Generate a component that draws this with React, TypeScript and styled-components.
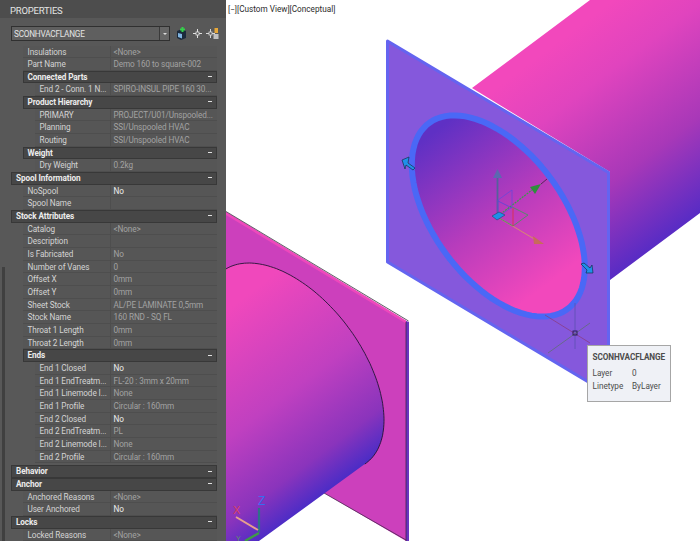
import React from "react";
import styled, { createGlobalStyle } from "styled-components";

const Global = createGlobalStyle`
  html, body { margin: 0; padding: 0; background: #fff; }
  #root { width: 700px; height: 541px; overflow: hidden; }
`;

const Screen = styled.div`
  display: flex;
  width: 700px;
  height: 541px;
  overflow: hidden;
  font-family: Roboto, "Noto Sans", sans-serif;
`;

const Panel = styled.aside`
  display: flex;
  flex-direction: column;
  width: 226px;
  height: 541px;
  flex: none;
  background: #585858;
  overflow: hidden;
`;

const TitleBar = styled.header`
  display: flex;
  align-items: center;
  height: 18px;
  padding: 2px 0 0 10px;
  box-sizing: border-box;
  background: #4d4d4d;
  color: #e4e4e4;
  font-size: 9.5px;
  letter-spacing: -0.2px;
`;

const SelectorRow = styled.div`
  display: flex;
  align-items: center;
  height: 27.5px;
  padding: 4px 0 0 11px;
  box-sizing: border-box;
`;

const Select = styled.div`
  display: flex;
  align-items: center;
  width: 159px;
  height: 15px;
  box-sizing: border-box;
  background: #5f5f5f;
  border: 1px solid #303030;
  color: #e4e4e4;
  font-size: 8.2px;
  letter-spacing: -0.2px;
`;

const SelectText = styled.span`
  flex: 1;
  padding-left: 2px;
`;

const SelectArrow = styled.span`
  display: flex;
  align-items: center;
  justify-content: center;
  width: 9px;
  height: 100%;
  border-left: 1px solid #3a3a3a;
  background: #666;
  &::after {
    content: "";
    border-left: 2px solid transparent;
    border-right: 2px solid transparent;
    border-top: 2px solid #ddd;
  }
`;

const Tools = styled.div`
  display: flex;
  align-items: center;
  gap: 0.5px;
  margin-left: 4px;
`;

const ToolIcon = styled.svg`
  width: 15px;
  height: 15px;
  display: block;
`;

const Body = styled.div`
  display: flex;
  flex: 1;
  min-height: 0;
`;

const Gutter = styled.div`
  display: flex;
  align-items: flex-end;
  width: 11px;
  flex: none;
  padding-left: 2px;
  box-sizing: border-box;
`;

const Thumb = styled.div`
  width: 3px;
  height: 274px;
  background: #404040;
`;

const List = styled.div`
  width: 206px;
  flex: none;
`;

const SectionRow = styled.div<{ $level: number; $gap?: boolean }>`
  display: flex;
  align-items: center;
  justify-content: space-between;
  height: 12.67px;
  box-sizing: border-box;
  margin-left: ${(p) => p.$level * 12}px;
  margin-top: ${(p) => (p.$gap ? 2.2 : 0)}px;
  padding: 0 4px 1px ${(p) => (p.$level === 0 ? 4 : 3.5)}px;
  background: #474747;
  border: 1px solid #383838;
  color: #ececec;
  font-size: 8.2px;
  letter-spacing: -0.1px;
  font-weight: 700;
`;

const Minus = styled.span`
  width: 4px;
  height: 1px;
  background: #e0e0e0;
`;

const PropRow = styled.div<{ $level: number }>`
  display: flex;
  height: 12.67px;
  box-sizing: border-box;
  margin-left: ${(p) => p.$level * 12}px;
  border-bottom: 1px solid #4e4e4e;
  background: #565656;
  font-size: 8.2px;
  letter-spacing: -0.1px;
  line-height: 12px;
  white-space: nowrap;
`;

const Label = styled.div<{ $level: number }>`
  width: ${(p) => 100 - p.$level * 12}px;
  flex: none;
  box-sizing: border-box;
  padding-left: 4.5px;
  color: #d4d4d4;
  border-right: 1px solid #4e4e4e;
  overflow: hidden;
`;

const Value = styled.div<{ $on?: boolean }>`
  flex: 1;
  padding-left: 2.5px;
  color: ${(p) => (p.$on ? "#ececec" : "#a2a2a2")};
  overflow: hidden;
`;

const Viewport = styled.main`
  position: relative;
  flex: 1;
  height: 541px;
  background: #fff;
`;

const Canvas = styled.svg`
  display: block;
  width: 474px;
  height: 541px;
`;

const ViewLabel = styled.div`
  position: absolute;
  left: 2px;
  top: 3px;
  color: #2c2c2c;
  font-size: 8.2px;
  line-height: 12px;
  white-space: nowrap;
`;

const Tooltip = styled.div`
  position: absolute;
  left: 361px;
  top: 345px;
  width: 84px;
  height: 57px;
  box-sizing: border-box;
  background: #eff1f6;
  border: 1px solid #a6a6a6;
  padding: 5px 0 0 4.5px;
  color: #4c4c4c;
  font-size: 8.2px;
`;

const TipTitle = styled.div`
  font-weight: 700;
  letter-spacing: -0.1px;
  line-height: 12px;
  margin-bottom: 4px;
`;

const TipGrid = styled.div`
  display: grid;
  grid-template-columns: 39.5px auto;
  row-gap: 1px;
  line-height: 12px;
`;

type Item =
  | { kind: "s"; level: number; text: string; gap?: boolean }
  | { kind: "p"; level: number; label: string; value?: string; on?: boolean };

const s = (level: number, text: string, gap?: boolean): Item => ({ kind: "s", level, text, gap });
const p = (level: number, label: string, value?: string, on?: boolean): Item => ({
  kind: "p",
  level,
  label,
  value,
  on,
});

const items: Item[] = [
  p(1, "Insulations", "<None>"),
  p(1, "Part Name", "Demo 160 to square-002"),
  s(1, "Connected Parts"),
  p(2, "End 2 - Conn. 1 N...", "SPIRO-INSUL PIPE 160 30..."),
  s(1, "Product Hierarchy"),
  p(2, "PRIMARY", "PROJECT/U01/Unspooled..."),
  p(2, "Planning", "SSI/Unspooled HVAC"),
  p(2, "Routing", "SSI/Unspooled HVAC"),
  s(1, "Weight"),
  p(2, "Dry Weight", "0.2kg"),
  s(0, "Spool Information"),
  p(1, "NoSpool", "No", true),
  p(1, "Spool Name"),
  s(0, "Stock Attributes"),
  p(1, "Catalog", "<None>"),
  p(1, "Description"),
  p(1, "Is Fabricated", "No"),
  p(1, "Number of Vanes", "0"),
  p(1, "Offset X", "0mm"),
  p(1, "Offset Y", "0mm"),
  p(1, "Sheet Stock", "AL/PE LAMINATE 0,5mm"),
  p(1, "Stock Name", "160 RND - SQ FL"),
  p(1, "Throat 1 Length", "0mm"),
  p(1, "Throat 2 Length", "0mm"),
  s(1, "Ends"),
  p(2, "End 1 Closed", "No", true),
  p(2, "End 1  EndTreatm...", "FL-20 : 3mm x 20mm"),
  p(2, "End 1 Linemode I...", "None"),
  p(2, "End 1 Profile", "Circular : 160mm"),
  p(2, "End 2 Closed", "No", true),
  p(2, "End 2  EndTreatm...", "PL"),
  p(2, "End 2 Linemode I...", "None"),
  p(2, "End 2 Profile", "Circular : 160mm"),
  s(0, "Behavior", true),
  s(0, "Anchor"),
  p(1, "Anchored Reasons", "<None>"),
  p(1, "User Anchored", "No", true),
  s(0, "Locks"),
  p(1, "Locked Reasons", "<None>"),
];

const isoPoints = (cx: number, cy: number, r: number, from = 0, to = 360) => {
  const pts: string[] = [];
  const steps = 96;
  for (let i = 0; i <= steps; i++) {
    const t = ((from + ((to - from) * i) / steps) * Math.PI) / 180;
    const x = cx + r * Math.cos(t);
    const y = cy + r * (0.594 * Math.cos(t) + Math.sin(t));
    pts.push(`${x.toFixed(1)} ${y.toFixed(1)}`);
  }
  return pts;
};

const lowerArc = isoPoints(294.6, 367, 89.4, -141, 38.3);

function Scene() {
  const ox = 226;
  return (
    <Canvas viewBox={`${ox} 0 474 541`}>
      <defs>
        <linearGradient id="pipe" gradientUnits="userSpaceOnUse" x1="560" y1="40" x2="692" y2="216">
          <stop offset="0" stopColor="#f248bc" />
          <stop offset="0.25" stopColor="#e044be" />
          <stop offset="0.66" stopColor="#a838b8" />
          <stop offset="1" stopColor="#5a2cc4" />
        </linearGradient>
        <linearGradient id="hole" gradientUnits="userSpaceOnUse" x1="430" y1="135" x2="544" y2="287">
          <stop offset="0" stopColor="#5f30c4" />
          <stop offset="0.55" stopColor="#b83cbc" />
          <stop offset="1" stopColor="#f248bc" />
        </linearGradient>
        <linearGradient id="lower" gradientUnits="userSpaceOnUse" x1="240" y1="300" x2="364" y2="465">
          <stop offset="0" stopColor="#f048bc" />
          <stop offset="0.5" stopColor="#c040c0" />
          <stop offset="0.83" stopColor="#8a34bc" />
          <stop offset="1" stopColor="#4a2cc6" />
        </linearGradient>
      </defs>

      <polygon points="472,88 590,0 700,0 700,213 610,280 610,172" fill="url(#pipe)" />
      <polygon points="387.5,41 608.5,172.5 608.5,394 387.5,262" fill="#8558dc" stroke="#6464f0" strokeWidth="3" strokeLinejoin="round" />
      <polygon points={isoPoints(498.3, 216, 86.5).join(",")} fill="url(#hole)" stroke="#4a68f6" strokeWidth="6" strokeLinejoin="round" />

      <line x1="497.5" y1="217" x2="497.5" y2="176" stroke="#55609c" strokeWidth="1.8" />
      <polygon points="497.5,169 493,178 502,178" fill="#5c68b0" />
      <line x1="498" y1="216" x2="532" y2="190" stroke="#3c9a48" strokeWidth="1.2" strokeDasharray="2 1" />
      <polygon points="541,184 530,187 535,194" fill="#2e8f3c" />
      <line x1="541" y1="184" x2="547" y2="179" stroke="#402040" strokeWidth="0.8" />
      <line x1="499" y1="218" x2="536" y2="240" stroke="#d88a70" strokeWidth="1" />
      <polygon points="544,244 533,236 534,244" fill="#c86a5c" />
      <path d="M498 200 L512 190 L512 207 L498 217 Z" fill="none" stroke="#6a48d8" strokeWidth="0.8" />
      <path d="M498 201 L512 208" fill="none" stroke="#5848d8" strokeWidth="0.8" />
      <path d="M512 207 L528 215 L513 226 L499 218" fill="none" stroke="#3c9a58" strokeWidth="0.8" />
      <path d="M513 208 L513 226" fill="none" stroke="#e03040" strokeWidth="0.8" />
      <polygon points="492,216 499,212 505,215 497,220" fill="#1f8ee8" stroke="#1a3a60" strokeWidth="0.5" />

      <polygon points="402,160 409,157 408,163 415,168 413,170 406,165 405,169" fill="#1f90e8" stroke="#12304f" strokeWidth="0.7" />
      <polygon points="593,273 586,273 587,270 581,264 584,263 590,268 592,265" fill="#1f90e8" stroke="#12304f" strokeWidth="0.7" />

      <line x1="545" y1="315" x2="590" y2="343" stroke="#8a3a78" strokeWidth="0.7" />
      <line x1="575" y1="303" x2="575" y2="349" stroke="#5a50b0" strokeWidth="0.8" />
      <line x1="548" y1="353" x2="590" y2="323" stroke="#5a7068" strokeWidth="0.7" />
      <rect x="573" y="331" width="4" height="4" fill="none" stroke="#1a1440" strokeWidth="0.8" />

      <polygon points="226,212 406,321 409,323 409,541 406,541 324,493 226,440" fill="#cc40bc" />
      <polygon points="226,212 406,320.5 406,323.5 226,215" fill="#ee48bc" />
      <polygon points="406,321 409,322 409,541 406,541" fill="#6a34c0" />
      <line x1="406" y1="322" x2="406" y2="541" stroke="#30203f" strokeWidth="0.7" />
      <line x1="226" y1="211.5" x2="408.5" y2="321" stroke="#3a3040" strokeWidth="0.8" />
      <line x1="324" y1="493" x2="406" y2="540" stroke="#4a2a50" strokeWidth="0.8" />
      <path d={`M${lowerArc.join(" L")} L259 541 L226 541 Z`} fill="url(#lower)" />
      <path d={`M${lowerArc.join(" L")}`} fill="none" stroke="#241436" strokeWidth="0.9" />

      <line x1="259" y1="508" x2="259" y2="532" stroke="#2e7288" strokeWidth="2.2" />
      <line x1="236" y1="517" x2="258" y2="530" stroke="#e8a08c" strokeWidth="2" />
      <line x1="259" y1="533" x2="245" y2="541" stroke="#3f9a48" strokeWidth="2.4" />
      <text x="258" y="505" fill="#3a6cf0" fontSize="12" fontFamily="Liberation Sans, sans-serif">Z</text>
      <text x="233" y="514" fill="#d84060" fontSize="11" fontFamily="Liberation Sans, sans-serif">X</text>
      <text x="236" y="540.5" fill="#5a9a60" fontSize="7" fontFamily="Liberation Sans, sans-serif">Y</text>
    </Canvas>
  );
}

export default function App() {
  return (
    <Screen>
      <Global />
      <Panel>
        <TitleBar>PROPERTIES</TitleBar>
        <SelectorRow>
          <Select>
            <SelectText>SCONHVACFLANGE</SelectText>
            <SelectArrow />
          </Select>
          <Tools>
            <ToolIcon viewBox="0 0 15 15">
              <path d="M3 5 L8 3 L12 5 L12 12 L7 14 L3 12 Z" fill="#1c2a3c" />
              <path d="M4 7 L8 8 L8 12.5 L4 11 Z" fill="#7fb4e0" />
              <path d="M8.5 1 L8.5 6 M6 3.5 L11 3.5" stroke="#35d04a" strokeWidth="2" />
            </ToolIcon>
            <ToolIcon viewBox="0 0 15 15">
              <path d="M7.5 3 V12 M3 7.5 H12" stroke="#e0e0e0" strokeWidth="1" />
              <rect x="6" y="6" width="3" height="3" fill="#585858" stroke="#e0e0e0" strokeWidth="0.8" />
            </ToolIcon>
            <ToolIcon viewBox="0 0 15 15">
              <path d="M5.5 3 V12 M1 7.5 H10" stroke="#d8d8d8" strokeWidth="1" />
              <rect x="4" y="6" width="3" height="3" fill="#585858" stroke="#d8d8d8" strokeWidth="0.8" />
              <rect x="9.5" y="2" width="3.5" height="5" fill="#e8a838" />
              <rect x="8.5" y="8" width="5" height="5" fill="#c0c0c0" />
            </ToolIcon>
          </Tools>
        </SelectorRow>
        <Body>
          <Gutter>
            <Thumb />
          </Gutter>
          <List>
            {items.map((it, i) =>
              it.kind === "s" ? (
                <SectionRow key={i} $level={it.level} $gap={it.gap}>
                  {it.text}
                  <Minus />
                </SectionRow>
              ) : (
                <PropRow key={i} $level={it.level}>
                  <Label $level={it.level}>{it.label}</Label>
                  <Value $on={it.on}>{it.value}</Value>
                </PropRow>
              )
            )}
          </List>
        </Body>
      </Panel>
      <Viewport>
        <Scene />
        <ViewLabel>[−][Custom View][Conceptual]</ViewLabel>
        <Tooltip>
          <TipTitle>SCONHVACFLANGE</TipTitle>
          <TipGrid>
            <span>Layer</span>
            <span>0</span>
            <span>Linetype</span>
            <span>ByLayer</span>
          </TipGrid>
        </Tooltip>
      </Viewport>
    </Screen>
  );
}
